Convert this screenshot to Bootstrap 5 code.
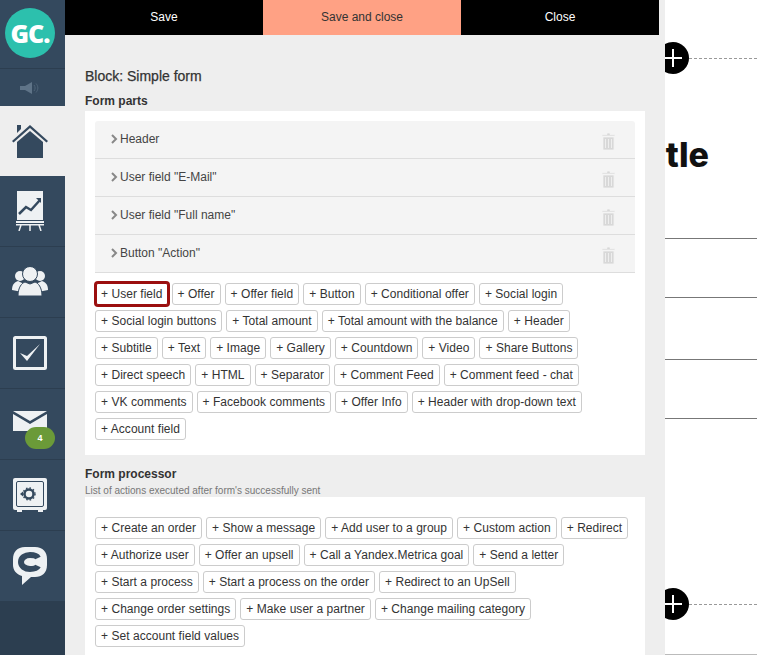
<!DOCTYPE html>
<html lang="en"><head><meta charset="utf-8"><title>Block editor</title>
<link href="https://cdn.jsdelivr.net/npm/bootstrap@5.3.0/dist/css/bootstrap.min.css" rel="stylesheet">
<style>
html,body{height:655px;overflow:hidden}
body{font-family:"Liberation Sans",Arial,sans-serif;font-size:12px;color:#333;background:#fff;-webkit-font-smoothing:antialiased}
.shell{width:757px;height:655px}
.rail{width:65px;background:#2c3e50;flex:none}
.rail-item{height:71px;background:#34495e;border-bottom:1px solid #2c3e50;display:flex;align-items:center;justify-content:center;position:relative;padding-right:5px}
.rail-logo{height:69px;background:#34495e;border-bottom:1px solid #2c3e50;display:flex;align-items:center;justify-content:center;padding-right:5px}
.logo-disc{width:50px;height:50px;border-radius:50%;background:#2cc0ad;color:#fff;font-weight:800;font-size:25px;line-height:50px;text-align:center;letter-spacing:-1px;font-family:"Open Sans",sans-serif;margin-top:-3px}
.rail-mute{height:37px;background:#34495e;display:flex;align-items:center;justify-content:center;padding-right:5px}
.rail-item.active{height:70px;background:#eee;border:0}
.mail-count{position:absolute;left:25px;top:38px;width:30px;height:22px;border-radius:11px;background:#6b9a38;color:#fff;font-size:9px;font-weight:700;line-height:22px;text-align:center}
.envelope{margin-top:-7px}
.editor{width:600px;flex:none;background:#eee;position:relative;z-index:2}
.topbar{width:594px;height:35px}
.topbar .btn{flex:1 1 0;border:0;border-radius:0;background:#000;color:#fff;font-size:12px;line-height:35px;padding:0;height:35px}
.topbar .btn.save-close{background:#ffa184;color:#333}
.editor-body{padding:33px 20px 0}
.block-title{font-size:14px;line-height:16px;margin:0 0 10px;font-weight:400;color:#333;-webkit-text-stroke:.25px #333}
.part-title{font-size:12px;font-weight:700;line-height:14px;margin:0;color:#333}
.part-hint{font-size:10px;line-height:12px;color:#777;margin-top:4px;height:12px}
.sheet{background:#fff;padding:10px;margin-top:3px}
.sheet-bottom{height:344px;margin-bottom:12px}
.part-row{height:38px;background:#f4f4f4;border-bottom:1px solid #ddd;display:flex;align-items:center;padding:0 20px 2px 15px;font-size:12px;color:#444;gap:2px}
.part-row:first-child{border-radius:3px 3px 0 0}
.part-row svg.trash{margin-left:auto;margin-top:5px}
.chips{display:flex;flex-wrap:wrap;gap:5px 4px;margin-top:10px}
.chip{font-size:12px;line-height:20px;height:22px;padding:0 5px;border:1px solid #ccc;border-radius:3px;background:#fff;color:#333;white-space:nowrap;letter-spacing:.04px}
.chip.picked{box-shadow:0 0 0 2px #9b0f0f;border-color:#9b0f0f;border-radius:2px;margin:0 0 0 1px;padding:0 4px}
.proc-sheet{margin-top:0;padding-top:20px;height:170px}
.stage{flex:1 1 auto;position:relative;overflow:hidden;background:#fff}
.stage-rule{border-top:1px solid #777;margin-top:58px}
.stage-rule.gap-title{margin-top:63px}
.stage-rule.gap-wide{margin-top:61px}
.stage-rule.rule-faint{margin-top:49px;border-color:#bbb}
.dash{border-top:1px dashed #999;margin-left:24px;margin-top:58px}
.dash.dash-low{margin-top:185px}
.stage-title{font-family:Inter,"Liberation Sans",sans-serif;font-weight:800;font-size:34px;line-height:40px;color:#111;margin:76px 0 0;padding-right:48px;white-space:nowrap;display:flex;justify-content:flex-end}
.plus-disc{position:absolute;left:-8px;width:32px;height:32px;border-radius:50%;background:#000}
.plus-disc::before,.plus-disc::after{content:"";position:absolute;background:#fff}
.plus-disc::before{left:7px;right:7px;top:15px;height:2px}
.plus-disc::after{top:7px;bottom:7px;left:15px;width:2px}
.plus-top{top:42px}
.plus-low{top:588px}
</style></head>
<body>
<div class="shell d-flex">
  <nav class="rail d-flex flex-column">
    <div class="rail-logo"><div class="logo-disc">GC.</div></div>
    <div class="rail-mute"><svg width="22" height="14" viewBox="0 0 22 14"><path d="M1 5h5l7-4v12l-7-4H1z" fill="#5f7488"/><path d="M15 4c1.500 2 1.500 4 0 6M17 2.500c2.500 3 2.500 6 0 9" stroke="#4f6478" fill="none"/></svg></div>
    <div class="rail-item active"><svg width="36" height="34" viewBox="0 0 36 34"><path d="M5 1h4v4L5 9z" fill="#34495e"/><path d="M0 17 18 1l18 16-1.500 1.500L18 4 1.500 18.500z" fill="#34495e"/><path d="M5 18 18 7l13 11v16H5z" fill="#34495e"/></svg></div>
    <div class="rail-item"><svg width="28" height="40" viewBox="0 0 28 40"><path d="M1 0h26v29H1z" fill="#eef1f3"/><path d="M3 23l7-7 5 3 9-10" stroke="#34495e" stroke-width="2.500" fill="none"/><path d="M20 7h5v5z" fill="#34495e"/><path d="M0 30h28v2H0zM0 33h28v1.500H0z" fill="#eef1f3"/><path d="M5 34 3 40M14 34v6M23 34l2 6" stroke="#eef1f3" stroke-width="1.500"/></svg></div>
    <div class="rail-item"><svg width="36" height="30" viewBox="0 0 36 30"><g fill="#eef1f3"><circle cx="8" cy="9" r="5"/><circle cx="28" cy="9" r="5"/><path d="M0 23c0-6 3-8 6-9l4 2v9z"/><path d="M36 23c0-6-3-8-6-9l-4 2v9z"/></g><circle cx="18" cy="7" r="7.500" fill="#eef1f3" stroke="#34495e"/><path d="M6 29c0-9 4-13 7-14l5 2 5-2c3 1 7 5 7 14z" fill="#eef1f3" stroke="#34495e"/></svg></div>
    <div class="rail-item"><svg width="34" height="34" viewBox="0 0 34 34"><rect x="1.500" y="1.500" width="31" height="31" rx="1" fill="#34495e" stroke="#eef1f3" stroke-width="3"/><path d="M7 17l7 8L27 8l-13 12z" fill="#eef1f3"/></svg></div>
    <div class="rail-item"><svg class="envelope" width="34" height="20" viewBox="0 0 34 20"><path d="M0 0h34L17 10z" fill="#eef1f3"/><path d="M0 3v17h34V3L17 13z" fill="#eef1f3"/></svg><span class="mail-count">4</span></div>
    <div class="rail-item"><svg width="34" height="34" viewBox="0 0 34 34"><rect width="34" height="32" rx="2" fill="#eef1f3"/><path d="M4 32h5v2H4zM25 32h5v2h-5z" fill="#eef1f3"/><rect x="3.500" y="3.500" width="27" height="25" rx="1.500" fill="none" stroke="#34495e"/><circle cx="16" cy="16" r="4.500" fill="none" stroke="#34495e" stroke-width="2.500"/><circle cx="16" cy="16" r="6" fill="none" stroke="#34495e" stroke-width="1.500" stroke-dasharray="1.500 2"/><path d="M7 16l3-2.500v5z" fill="#34495e"/></svg></div>
    <div class="rail-item"><svg width="34" height="38" viewBox="0 0 34 38"><path d="M12 0h10c8 0 12 5 12 12v6c0 8-5 12-12 12h-4l-9 8v-9C3 27 0 23 0 18v-6C0 5 4 0 12 0z" fill="#eef1f3"/><path d="M25 11c-1-2-4-3-8-3-5 0-9 3-9 7s4 7 9 7c4 0 7-1 8-3" stroke="#34495e" stroke-width="6" fill="none"/></svg></div>
  </nav>

  <main class="editor">
    <div class="topbar d-flex">
      <button type="button" class="btn">Save</button>
      <button type="button" class="btn save-close">Save and close</button>
      <button type="button" class="btn">Close</button>
    </div>
    <div class="editor-body">
      <h1 class="block-title">Block: Simple form</h1>
      <h2 class="part-title">Form parts</h2>
      <section class="sheet sheet-bottom">
        <div class="part-row"><svg width="8" height="10" viewBox="0 0 8 10"><path d="M2 1l4 4-4 4" stroke="#888" stroke-width="2" fill="none"/></svg>Header<svg class="trash" width="13" height="17" viewBox="0 0 13 17"><path d="M5 0h3v1.500h5V3H0V1.500h5zM1 4h11v13H1zM3.500 6v9M6.500 6v9M9.500 6v9" fill="#d8d8d8" stroke="#f4f4f4" stroke-width=".8"/></svg></div>
        <div class="part-row"><svg width="8" height="10" viewBox="0 0 8 10"><path d="M2 1l4 4-4 4" stroke="#888" stroke-width="2" fill="none"/></svg>User field "E-Mail"<svg class="trash" width="13" height="17" viewBox="0 0 13 17"><path d="M5 0h3v1.500h5V3H0V1.500h5zM1 4h11v13H1zM3.500 6v9M6.500 6v9M9.500 6v9" fill="#d8d8d8" stroke="#f4f4f4" stroke-width=".8"/></svg></div>
        <div class="part-row"><svg width="8" height="10" viewBox="0 0 8 10"><path d="M2 1l4 4-4 4" stroke="#888" stroke-width="2" fill="none"/></svg>User field "Full name"<svg class="trash" width="13" height="17" viewBox="0 0 13 17"><path d="M5 0h3v1.500h5V3H0V1.500h5zM1 4h11v13H1zM3.500 6v9M6.500 6v9M9.500 6v9" fill="#d8d8d8" stroke="#f4f4f4" stroke-width=".8"/></svg></div>
        <div class="part-row"><svg width="8" height="10" viewBox="0 0 8 10"><path d="M2 1l4 4-4 4" stroke="#888" stroke-width="2" fill="none"/></svg>Button "Action"<svg class="trash" width="13" height="17" viewBox="0 0 13 17"><path d="M5 0h3v1.500h5V3H0V1.500h5zM1 4h11v13H1zM3.500 6v9M6.500 6v9M9.500 6v9" fill="#d8d8d8" stroke="#f4f4f4" stroke-width=".8"/></svg></div>
        <div class="chips">
          <span class="chip picked">+ User field</span><span class="chip">+ Offer</span><span class="chip">+ Offer field</span><span class="chip">+ Button</span><span class="chip">+ Conditional offer</span><span class="chip">+ Social login</span><span class="chip">+ Social login buttons</span><span class="chip">+ Total amount</span><span class="chip">+ Total amount with the balance</span><span class="chip">+ Header</span><span class="chip">+ Subtitle</span><span class="chip">+ Text</span><span class="chip">+ Image</span><span class="chip">+ Gallery</span><span class="chip">+ Countdown</span><span class="chip">+ Video</span><span class="chip">+ Share Buttons</span><span class="chip">+ Direct speech</span><span class="chip">+ HTML</span><span class="chip">+ Separator</span><span class="chip">+ Comment Feed</span><span class="chip">+ Comment feed - chat</span><span class="chip">+ VK comments</span><span class="chip">+ Facebook comments</span><span class="chip">+ Offer Info</span><span class="chip">+ Header with drop-down text</span><span class="chip">+ Account field</span>
        </div>
      </section>
      <h2 class="part-title">Form processor</h2>
      <div class="part-hint">List of actions executed after form's successfully sent</div>
      <section class="sheet proc-sheet">
        <div class="chips mt-0">
          <span class="chip">+ Create an order</span><span class="chip">+ Show a message</span><span class="chip">+ Add user to a group</span><span class="chip">+ Custom action</span><span class="chip">+ Redirect</span><span class="chip">+ Authorize user</span><span class="chip">+ Offer an upsell</span><span class="chip">+ Call a Yandex.Metrica goal</span><span class="chip">+ Send a letter</span><span class="chip">+ Start a process</span><span class="chip">+ Start a process on the order</span><span class="chip">+ Redirect to an UpSell</span><span class="chip">+ Change order settings</span><span class="chip">+ Make user a partner</span><span class="chip">+ Change mailing category</span><span class="chip">+ Set account field values</span>
        </div>
      </section>
    </div>
  </main>

  <aside class="stage">
    <div class="plus-disc plus-top"></div>
    <div class="plus-disc plus-low"></div>
    <div class="dash"></div>
    <p class="stage-title">Title</p>
    <div class="stage-rule gap-title"></div>
    <div class="stage-rule"></div>
    <div class="stage-rule gap-wide"></div>
    <div class="stage-rule"></div>
    <div class="dash dash-low"></div>
    <div class="stage-rule rule-faint"></div>
  </aside>
</div>
<script src="https://cdn.jsdelivr.net/npm/bootstrap@5.3.0/dist/js/bootstrap.bundle.min.js"></script>
</body></html>
